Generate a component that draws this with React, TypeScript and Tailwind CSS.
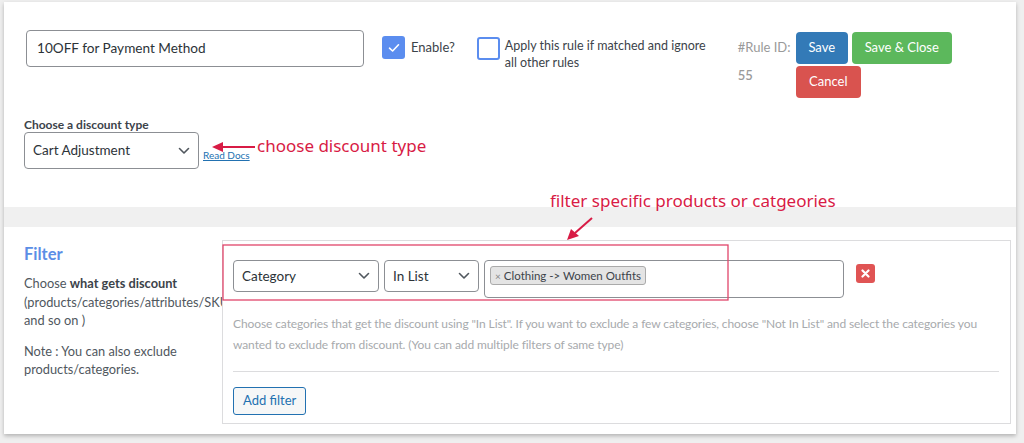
import React from "react";

function Chevron({ className = "" }: { className?: string }) {
  return (
    <svg className={className} width="12" height="8" viewBox="0 0 12 8" fill="none">
      <path d="M1.5 1.5 L6 6 L10.5 1.5" stroke="#50575e" strokeWidth="1.6" strokeLinecap="round" strokeLinejoin="round" />
    </svg>
  );
}

export default function App() {
  const ui = { fontFamily: "Lato, 'Noto Sans', sans-serif" };
  return (
    <div className="w-[1024px] h-[443px] bg-[#efefef] pl-[4px] pt-[2px] overflow-hidden" style={ui}>
      <div className="relative w-[1012px] h-[432px] bg-white shadow-[0_2px_4px_rgba(0,0,0,0.25)] text-[#3c434a]">
        {/* Top row */}
        <div className="flex items-start pl-[22px] pt-[28px] h-[96px]">
          <div className="w-[338px] h-[37px] border border-[#8c8f94] rounded-[4px] flex items-center px-[10px] text-[13.6px] text-[#2c3338]">
            10OFF for Payment Method
          </div>
          <div className="flex items-center ml-[18px] mt-[6px]">
            <div className="w-[23px] h-[23px] rounded-[3px] bg-[#5b8def] flex items-center justify-center">
              <svg width="12" height="10" viewBox="0 0 12 10" fill="none">
                <path d="M1.5 5.2 L4.6 8 L10.5 1.8" stroke="white" strokeWidth="1.6" strokeLinecap="round" strokeLinejoin="round" />
              </svg>
            </div>
            <span className="ml-[6px] text-[13px] text-[#3c434a]">Enable?</span>
          </div>
          <div className="flex items-start ml-[22px] mt-[7px]">
            <div className="w-[23px] h-[23px] rounded-[3px] border-2 border-[#5b8def] bg-white" />
            <div className="ml-[5px] w-[215px] text-[12.5px] leading-[17px] text-[#3c434a]">
              Apply this rule if matched and ignore all other rules
            </div>
          </div>
          <div className="ml-[18px] mt-[9px] text-[13px] text-[#9a9a9a] w-[58px]">
            <div className="leading-[17px]">#Rule ID:</div>
            <div className="leading-[17px] mt-[11px] font-semibold">55</div>
          </div>
          <div className="flex flex-col gap-[2px] mt-[2px]">
            <div className="flex gap-[4px]">
              <div className="w-[52px] h-[32px] rounded-[4px] bg-[#337ab7] text-white text-[13px] flex items-center justify-center">Save</div>
              <div className="w-[100px] h-[32px] rounded-[4px] bg-[#5cb85c] text-white text-[13px] flex items-center justify-center">Save &amp; Close</div>
            </div>
            <div className="w-[65px] h-[32px] rounded-[4px] bg-[#d9534f] text-white text-[13px] flex items-center justify-center">Cancel</div>
          </div>
        </div>

        {/* Discount type */}
        <div className="pl-[20px] pt-[20px] h-[109px]">
          <div className="text-[12px] font-bold leading-[14px] text-[#3c434a]">Choose a discount type</div>
          <div className="flex items-end">
            <div className="w-[175px] h-[37px] border border-[#8c8f94] rounded-[4px] flex items-center justify-between pl-[8px] pr-[8px] text-[13.5px] text-[#2c3338]">
              <span>Cart Adjustment</span>
              <Chevron />
            </div>
            <a className="ml-[4px] mb-[8px] text-[10px] text-[#2271b1] underline leading-[12px]">Read Docs</a>
          </div>
        </div>

        {/* gray band */}
        <div className="h-[20px] bg-[#f0f0f0]" />

        {/* Filter section */}
        <div className="flex pt-[13px]">
          <div className="w-[218px] shrink-0 pl-[20px] pt-[5px] whitespace-nowrap">
            <div className="text-[16.5px] font-bold text-[#5b8ee6] leading-[18px]">Filter</div>
            <div className="mt-[11px] text-[12.8px] leading-[18.5px] text-[#50575e]">
              <div>Choose <b className="text-[#3c434a]">what gets discount</b></div>
              <div>(products/categories/attributes/SKUs</div>
              <div>and so on )</div>
              <div className="mt-[12px]">Note : You can also exclude</div>
              <div>products/categories.</div>
            </div>
          </div>
          <div className="relative w-[789px] h-[184px] bg-white border border-[#dcdcde] px-[10px] pt-[19px]">
            <div className="flex items-start">
              <div className="w-[146px] h-[32px] border border-[#8c8f94] rounded-[4px] flex items-center justify-between px-[8px] text-[13.5px] text-[#2c3338]">
                <span>Category</span>
                <Chevron />
              </div>
              <div className="ml-[5px] w-[95px] h-[32px] border border-[#8c8f94] rounded-[4px] flex items-center justify-between px-[8px] text-[13.5px] text-[#2c3338]">
                <span>In List</span>
                <Chevron />
              </div>
              <div className="ml-[5px] w-[360px] h-[38px] border border-[#8c8f94] rounded-[4px] pl-[5px] pt-[5px] flex items-start">
                <div className="flex items-center h-[19px] bg-[#e4e4e4] border border-[#aaaaaa] rounded-[3px] px-[4px] text-[11.5px] leading-[14px] text-[#3c434a]">
                  <span className="text-[#888] text-[10px] mr-[3px]">×</span>
                  Clothing -&gt; Women Outfits
                </div>
              </div>
              <div className="ml-[12px] mt-[4px] w-[19px] h-[19px] rounded-[3px] bg-[#e05454] flex items-center justify-center">
                <svg width="9" height="9" viewBox="0 0 9 9">
                  <path d="M1.5 1.5 L7.5 7.5 M7.5 1.5 L1.5 7.5" stroke="white" strokeWidth="2.2" strokeLinecap="round" />
                </svg>
              </div>
            </div>
            <div className="mt-[15px] text-[12px] leading-[21px] text-[#a7aaad] tracking-[-0.1px] whitespace-nowrap">
              Choose categories that get the discount using "In List". If you want to exclude a few categories, choose "Not In List" and select the categories you
              <br />
              wanted to exclude from discount. (You can add multiple filters of same type)
            </div>
            <div className="mt-[16px] border-t border-[#dcdcde] w-[766px]" />
            <div className="mt-[15px] inline-flex items-center h-[28px] px-[9px] border border-[#2271b1] rounded-[3px] bg-[#f6f7f7] text-[13px] text-[#2271b1]">
              Add filter
            </div>
          </div>
        </div>

        {/* Annotations */}
        <svg className="absolute left-[218px] top-[242px] pointer-events-none" width="507" height="57" viewBox="0 0 507 57">
          <rect x="1" y="1" width="505" height="55" fill="none" stroke="#e0456a" strokeWidth="1.3" />
        </svg>
        <div className="absolute left-[253px] top-[132px] text-[17px] text-[#d81b45] leading-[24px]" style={{ fontFamily: "'Noto Sans', sans-serif" }}>
          choose discount type
        </div>
        <svg className="absolute left-[206px] top-[137px]" width="46" height="16" viewBox="0 0 46 16">
          <path d="M12 8 L45 8" stroke="#d81b45" strokeWidth="2" />
          <path d="M2 8 L13 3 L13 13 Z" fill="#d81b45" />
        </svg>
        <div className="absolute left-[546px] top-[187px] text-[17px] text-[#d81b45] leading-[24px]" style={{ fontFamily: "'Noto Sans', sans-serif" }}>
          filter specific products or catgeories
        </div>
        <svg className="absolute left-[560px] top-[214px]" width="32" height="26" viewBox="0 0 32 26">
          <path d="M28 2 L11 17" stroke="#d81b45" strokeWidth="2" />
          <path d="M3 24 L7 13 L15 20 Z" fill="#d81b45" />
        </svg>
      </div>
    </div>
  );
}
